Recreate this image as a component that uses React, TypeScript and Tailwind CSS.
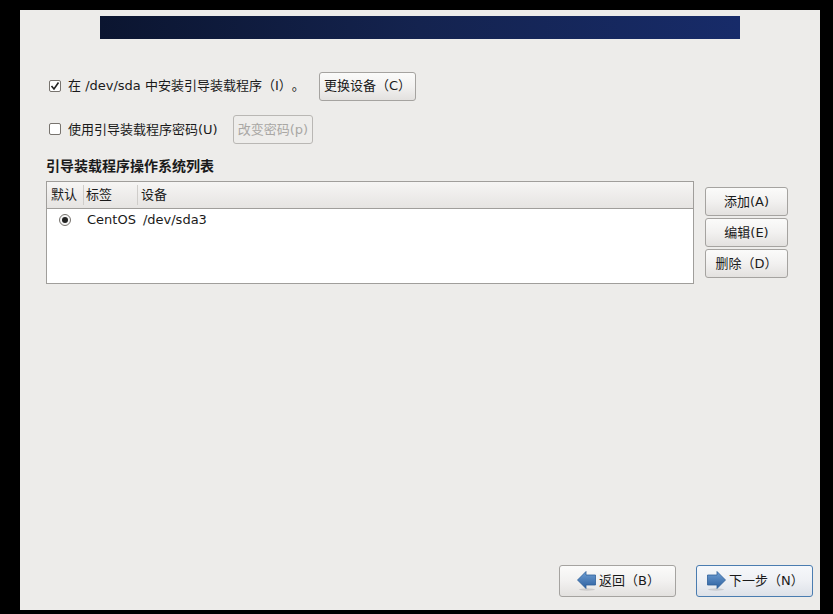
import React from "react";

const font = "font-['DejaVu_Sans','Noto_Sans_CJK_SC',sans-serif] [text-spacing-trim:space-all]";

const Btn: React.FC<{ className?: string; children: React.ReactNode }> = ({ className = "", children }) => (
  <div
    className={`flex items-center rounded-[3px] border text-[13px] ${className}`}
  >
    {children}
  </div>
);

const plain = "justify-center border-[#a5a3a0] bg-gradient-to-b from-[#fbfbfa] via-[#f2f1f0] to-[#e3e1df] text-[#1a1a1a]";

const Arrow: React.FC<{ flip?: boolean }> = ({ flip }) => (
  <svg width="19" height="20" viewBox="0 0 19 20" className={flip ? "" : "-scale-x-100"}>
    <defs>
      <linearGradient id={flip ? "arrowA" : "arrowB"} x1="0" y1="0" x2="0" y2="1">
        <stop offset="0" stopColor="#6f9fd4" />
        <stop offset="1" stopColor="#2c5f9e" />
      </linearGradient>
    </defs>
    <ellipse cx="9" cy="18.5" rx="8" ry="1.2" fill="#000" opacity="0.12" />
    <path d="M0.5 4H10V0.5L18.5 9L10 17.5V14H0.5Z" fill={`url(#${flip ? "arrowA" : "arrowB"})`} stroke="#2f5f99" strokeWidth="0.8" />
  </svg>
);

const Check: React.FC<{ checked?: boolean }> = ({ checked }) => (
  <div className="mb-[1px] flex h-[12px] w-[12px] shrink-0 items-center justify-center rounded-[2px] border border-[#77736e] bg-white">
    {checked && (
      <svg width="10" height="10" viewBox="0 0 10 10">
        <path d="M1.5 5L4 8L8.5 1.5" fill="none" stroke="#222" strokeWidth="1.6" />
      </svg>
    )}
  </div>
);

export default function App() {
  return (
    <div className={`h-[614px] w-[833px] overflow-hidden bg-black pl-[20px] pt-[10px] ${font}`}>
      <div className="flex h-[600px] w-[800px] flex-col bg-[#edecea] text-[13px] text-[#1a1a1a]">
        <div className="ml-[80px] mt-[6px] h-[23px] w-[640px] bg-gradient-to-r from-[#0b1530] via-[#14234f] to-[#172b69]" />

        <div className="ml-[29px] mt-[33px] flex h-[29px] items-center">
          <Check checked />
          <span className="mb-[2px] ml-[7px] w-[251px] whitespace-nowrap">在 /dev/sda 中安装引导装载程序（I）。</span>
          <Btn className={`h-[29px] w-[97px] pb-[2px] ${plain}`}>更换设备（C）</Btn>
        </div>

        <div className="ml-[29px] mt-[14px] flex h-[29px] items-center">
          <Check />
          <span className="ml-[7px] w-[165px] whitespace-nowrap">使用引导装载程序密码(U)</span>
          <Btn className={`h-[29px] w-[80px] justify-center border-[#b9b7b4] bg-[#eeedeb] text-[#a9a7a4]`}>改变密码(p)</Btn>
        </div>

        <div className="ml-[26px] mt-[13px] h-[18px] text-[14px] font-bold leading-[18px]">引导装载程序操作系统列表</div>

        <div className="ml-[26px] mt-[6px] flex items-start">
          <div className="h-[103px] w-[648px] border border-[#a09e9b] bg-white">
            <div className="flex h-[27px] items-center border-b border-[#a09e9b] bg-gradient-to-b from-[#f6f5f4] to-[#e6e4e2]">
              <span className="w-[37px] border-r border-[#cfcdca] pl-[4px] leading-[20px]">默认</span>
              <span className="w-[54px] border-r border-[#cfcdca] pl-[2px] leading-[20px]">标签</span>
              <span className="pl-[3px] leading-[20px]">设备</span>
            </div>
            <div className="flex h-[22px] items-center">
              <div className="ml-[12px] flex h-[12px] w-[12px] items-center justify-center rounded-full border border-[#77736e] bg-[#f7f7f7]">
                <div className="h-[6px] w-[6px] rounded-full bg-[#222]" />
              </div>
              <span className="ml-[16px]">CentOS</span>
              <span className="ml-[7px]">/dev/sda3</span>
            </div>
          </div>
          <div className="ml-[11px] mt-[6px] flex flex-col gap-[2px]">
            <Btn className={`h-[29px] w-[83px] ${plain}`}>添加(A)</Btn>
            <Btn className={`h-[29px] w-[83px] ${plain}`}>编辑(E)</Btn>
            <Btn className={`h-[29px] w-[83px] ${plain}`}>删除（D）</Btn>
          </div>
        </div>

        <div className="mr-[7px] mt-auto mb-[13px] flex justify-end gap-[20px]">
          <Btn className="h-[32px] w-[117px] gap-[3px] border-[#a5a3a0] bg-gradient-to-b from-[#fbfbfa] via-[#f2f1f0] to-[#e3e1df] pl-[17px] text-[#1a1a1a]">
            <Arrow />
            <span>返回（B）</span>
          </Btn>
          <Btn className="h-[32px] w-[117px] gap-[3px] border-[#4a7cb0] bg-gradient-to-b from-[#f6f8fb] via-[#eef0f4] to-[#dde1e8] pl-[10px] text-[#1a1a1a]">
            <Arrow flip />
            <span>下一步（N）</span>
          </Btn>
        </div>
      </div>
    </div>
  );
}
